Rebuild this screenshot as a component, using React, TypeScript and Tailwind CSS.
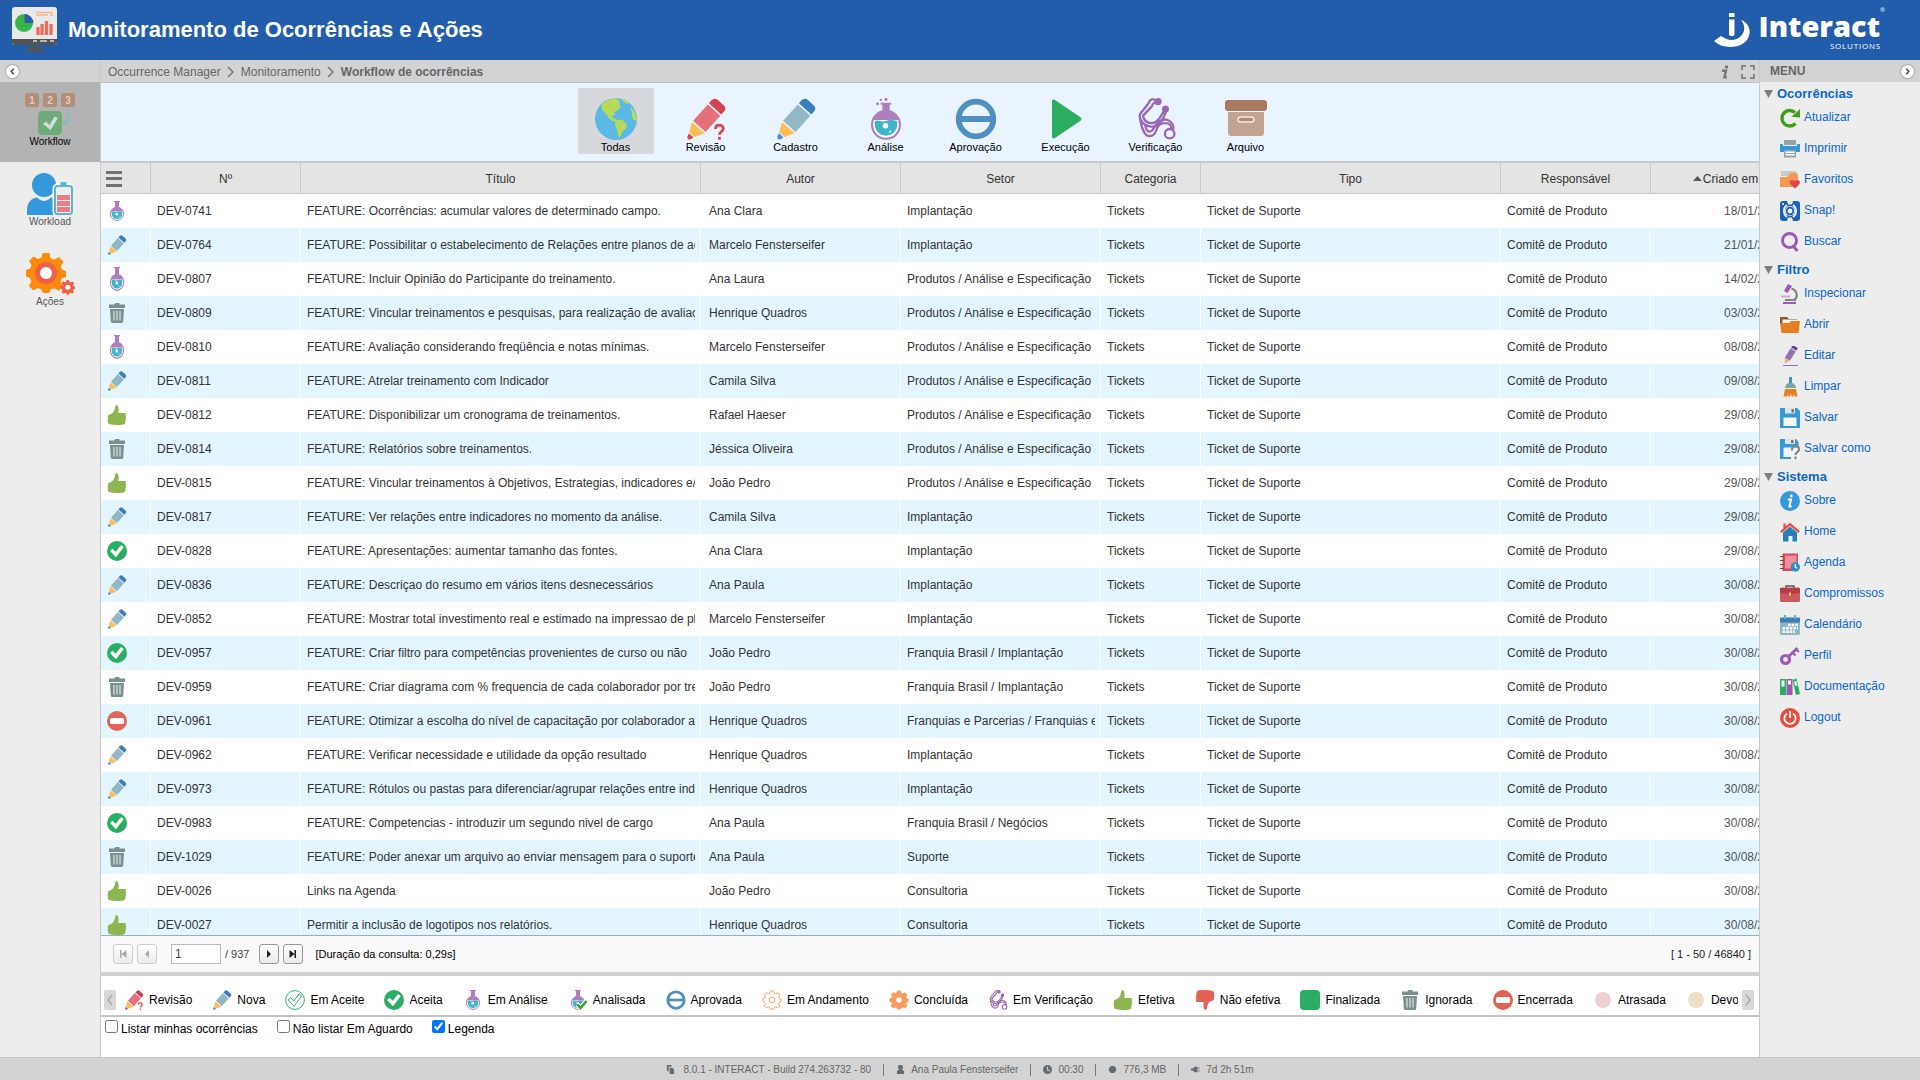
import { useState } from 'react';
import type { ReactNode } from 'react';

interface IconProps {
  className?: string;
}

interface PencilProps extends IconProps {
  body?: string;
  cap?: string;
  tip?: string;
  question?: boolean;
}

/* ---------- status icons ---------- */

function Pencil({ className = 'size-5', body = '#93b7c4', cap = '#3a7fbd', tip = '#4c8fc9', question = false }: PencilProps) {
  return (
    <svg viewBox="0 0 40 40" className={className} aria-hidden="true">
      <g transform="rotate(42 20 20)">
        <path d="M12 3a4 4 0 0 1 4-4h8a4 4 0 0 1 4 4v4H12z" fill={cap} />
        <path d="M12 8.500h16v21H12z" fill={body} />
        <path d="M12 31h16l-4.500 9h-7z" fill="#fdbd55" />
        <path d="M17 41h6l-1.200 3.500a2 2 0 0 1-3.600 0z" fill={tip} />
      </g>
      {question && (
        <g fill="none" stroke="#d9434f" strokeWidth="2.600">
          <path d="M29 29.500c0-5 7.500-4.500 7.500-.5 0 3-3.700 2.800-3.700 6" />
          <path d="M32.800 37v2.800" />
        </g>
      )}
    </svg>
  );
}

function RevisionPencil({ className }: IconProps) {
  return <Pencil className={className} body="#e5707a" cap="#d1434f" tip="#cf4a55" question />;
}

function Flask({ className = 'size-5', bubbles = false, check = false }: IconProps & { bubbles?: boolean; check?: boolean }) {
  return (
    <svg viewBox="0 0 40 40" preserveAspectRatio="none" className={className} aria-hidden="true">
      {bubbles && (
        <g fill="#a56fb9">
          <circle cx="12" cy="5.500" r="1.300" />
          <circle cx="15" cy="1.800" r="1" />
          <circle cx="20" cy="1.500" r="1.400" />
          <circle cx="16" cy="5" r=".8" />
        </g>
      )}
      <path d={bubbles ? 'M15 4.500h10v2h-1.500v8h-7v-8H15z' : 'M14 0h12v2h-2v12h-8V2h-2z'} fill="#ad80bd" />
      <circle cx="20" cy="25.500" r="13.300" fill="#fff" stroke="#ad80bd" strokeWidth="2" />
      <path d="M8 21c2-5 6-8 9-8.500h6c3 .5 7 3.500 9 8.500z" fill="#ad80bd" />
      <path d="M9.500 22c4-2 6 1.500 10 0s7-1 11 0c1.500 7-3 14-10.500 14S8 29 9.500 22z" fill="#40b4c8" />
      <circle cx="19.500" cy="26.500" r="2.600" fill="#fff" />
      <circle cx="24" cy="32" r="1" fill="#fff" />
      {check && (
        <>
          <path d="m19 29 6 7 12-14" fill="none" stroke="#fff" strokeWidth="9" />
          <path d="m19 29 6 7 12-14" fill="none" stroke="#3da40f" strokeWidth="5" />
        </>
      )}
    </svg>
  );
}

function AnalysedFlask({ className }: IconProps) {
  return <Flask className={className} check />;
}

function BubbleFlask({ className }: IconProps) {
  return <Flask className={className} bubbles />;
}

function Trash({ className = 'size-5' }: IconProps) {
  return (
    <svg viewBox="0 0 20 20" className={className} aria-hidden="true">
      <path d="M8 0h4.500v1.500H18V5H2V1.500h5.500zM3 6h14l-.8 12.500A1.600 1.600 0 0 1 14.600 20H5.400a1.600 1.600 0 0 1-1.600-1.500z" fill="#7c8f8e" />
      <path d="M7 8v9.500M10 8v9.500M13 8v9.500" stroke="#dfe6e6" strokeWidth="1.200" />
    </svg>
  );
}

function Thumb({ className = 'size-5', down = false }: IconProps & { down?: boolean }) {
  return (
    <svg viewBox="0 0 20 20" className={className} aria-hidden="true">
      <g transform={down ? 'rotate(180 10 10)' : undefined}>
        <path
          d="M.8 12c0-1.400.8-2.200 2-2.500C6 8.500 7.800 6 8.200 1.500 8.300.5 9.300 0 10 .3c1.700.8 2 4 1.200 7.700h6.500c1.300 0 1.800 1.500.8 2.400 1 .7.900 2.200 0 2.700.8.800.6 2.100-.2 2.600.5 1.500 0 3.300-1.800 3.900-2 .6-9 .6-12.500-.1C1.500 19 .8 18 .8 16.200z"
          fill={down ? '#e26354' : '#8db653'}
        />
      </g>
    </svg>
  );
}

function ThumbDown({ className }: IconProps) {
  return <Thumb className={className} down />;
}

function CheckCircle({ className = 'size-5' }: IconProps) {
  return (
    <svg viewBox="0 0 20 20" className={className} aria-hidden="true">
      <circle cx="10" cy="10" r="10" fill="#2aae63" />
      <path d="m3 10 6 6.300L16.800 6l-2.800-2-5.200 6.800L5.500 7.800z" fill="#fff" />
    </svg>
  );
}

function CheckCircleOutline({ className = 'size-5' }: IconProps) {
  return (
    <svg viewBox="0 0 20 20" className={className} fill="none" stroke="#35b36c" aria-hidden="true">
      <circle cx="10" cy="10" r="9.400" />
      <path d="m3 10 6 6.300L16.800 6l-2.800-2-5.200 6.800L5.500 7.800z" />
    </svg>
  );
}

function NoEntry({ className = 'size-5' }: IconProps) {
  return (
    <svg viewBox="0 0 20 20" className={className} aria-hidden="true">
      <circle cx="10" cy="10" r="10" fill="#e26358" />
      <rect x="3" y="7" width="14" height="6" rx="1.500" fill="#fff" />
    </svg>
  );
}

function Approve({ className = 'size-5' }: IconProps) {
  return (
    <svg viewBox="0 0 40 40" className={className} fill="none" stroke="#528fc1" strokeWidth="5.500" aria-hidden="true">
      <circle cx="20" cy="20" r="16.500" />
      <path d="M4 20h32" />
    </svg>
  );
}

const GEAR =
  'M8.300 0h3.400l.6 2.600 1.800.8L16.400 2l2.300 2.400-1.300 2.300.7 1.700L20 9v3l-2 .6-.7 1.800 1.200 2.200-2.200 2.300-2.300-1.300-1.800.7-.6 1.700H8.400l-.7-1.800-1.700-.7-2.300 1.300-2.300-2.300 1.300-2.300-.7-1.700L0 11.700V8.500l2.100-.7.700-1.700L1.500 4l2.300-2.300L6 3l1.700-.7z';

function Gear({ className = 'size-5', outline = false }: IconProps & { outline?: boolean }) {
  return (
    <svg viewBox="-1 -1 22 22" className={className} aria-hidden="true">
      <path d={GEAR} fill={outline ? 'none' : '#fa9a60'} stroke="#fa9a60" strokeWidth="1" strokeLinejoin="round" />
      <circle cx="10" cy="10" r="3" fill="#fff" stroke={outline ? '#fa9a60' : 'none'} />
    </svg>
  );
}

function GearOutline({ className }: IconProps) {
  return <Gear className={className} outline />;
}

function Stethoscope({ className = 'size-5' }: IconProps) {
  return (
    <svg viewBox="0 0 40 40" className={className} fill="none" stroke="#9b67b5" strokeWidth="2.200" strokeLinejoin="round" aria-hidden="true">
      <path d="M21 3c-3-3-7-2-8 2L5 15c-2 4 2 11 9 12 5 1 9-1 12-6l4-9" />
      <path d="M22.500 5c-4-2-5.500 0-6.500 3L7.500 17c1 4 4 7 8 7s6-2 8-5l5-8" />
      <path d="M5 19c0 6 3 14 6 16.500 4 2 8 0 9-4s4-8 9-7.500c4 0 6 2 5.500 6" />
      <path d="M10 26c0 3 1.500 6 4 6 4 0 4-6 8-9s8-3 11-1 4 5 3.500 8" />
      <circle cx="33" cy="34" r="4.500" />
      <circle cx="22" cy="3.500" r="2.300" fill="#9b67b5" />
      <circle cx="29" cy="10.500" r="2.300" fill="#9b67b5" />
    </svg>
  );
}

function Square({ className = 'size-5' }: IconProps) {
  return (
    <svg viewBox="0 0 20 20" className={className} aria-hidden="true">
      <rect width="20" height="20" rx="4" fill="#2aae63" />
    </svg>
  );
}

function PinkDot({ className = 'size-5' }: IconProps) {
  return (
    <svg viewBox="0 0 20 20" className={className} aria-hidden="true">
      <circle cx="10" cy="10" r="8" fill="#f0cfd2" />
    </svg>
  );
}

function SandDot({ className = 'size-5' }: IconProps) {
  return (
    <svg viewBox="0 0 20 20" className={className} aria-hidden="true">
      <circle cx="10" cy="10" r="8" fill="#efdec8" />
    </svg>
  );
}

/* ---------- toolbar icons ---------- */

function Globe({ className }: IconProps) {
  return (
    <svg viewBox="0 0 42 42" className={className} aria-hidden="true">
      <circle cx="21" cy="21" r="21" fill="#5bb9e6" />
      <path d="M7 6c5-4 9-5.500 14-6 3 3 5 4 3 6l2 3-3 3-4 2 1 3-4 1 4 3 2 1-1 2c-5-1-8-4-9-7C9 14 5 11 7 6z" fill="#b5dc58" />
      <path d="M26 1c4 .5 6 1.500 8 4l-2 1c-2-2-4-2-6-5zM22 22c5-2 8 2 10 5 0 4-4 5-5 8-1 2-2 4-3 4-2-2-1-5-2-8-2-2-3-6 0-9zM36 9c3 3 5 7 6 13-3 1-5-1-5-4 1-4-2-5-1-9z" fill="#b5dc58" />
    </svg>
  );
}

function Play({ className }: IconProps) {
  return (
    <svg viewBox="0 0 42 42" className={className} aria-hidden="true">
      <path d="M7 3.500c0-2 1.500-2.500 3-1.500l25.500 17.300c1.300 1 1.300 2.400 0 3.400L10 40c-1.500 1-3 .5-3-1.500z" fill="#2bae61" />
    </svg>
  );
}

function ArchiveBox({ className }: IconProps) {
  return (
    <svg viewBox="0 0 42 42" className={className} aria-hidden="true">
      <rect y="2" width="42" height="11" rx="3" fill="#a97a60" />
      <path d="M3 14h36v20.500a3.500 3.500 0 0 1-3.500 3.500h-29A3.500 3.500 0 0 1 3 34.500z" fill="#c1a390" />
      <rect x="13" y="19" width="16" height="5" rx="2.500" fill="#b08b75" stroke="#f2e9e3" strokeWidth="1.500" />
    </svg>
  );
}

/* ---------- sidebar icons ---------- */

function WorkflowIcon() {
  return (
    <svg viewBox="0 0 50 42" className="h-[42px] w-[50px]" aria-hidden="true">
      <path d="M12 7h25M43.500 13v17H40" fill="none" stroke="#82b8cb" strokeWidth="1.500" />
      <path d="m41.500 26.500-4 3.500 4 3z" fill="#82b8cb" />
      <g fill="#b58c76">
        <rect width="14" height="14" rx="2.500" />
        <rect x="18" width="14" height="14" rx="2.500" />
        <rect x="36" width="14" height="14" rx="2.500" />
      </g>
      <g fill="#d6cfcb" fontFamily="Liberation Sans, sans-serif" fontSize="10" fontWeight="700" textAnchor="middle">
        <text x="7" y="10.500">1</text>
        <text x="25" y="10.500">2</text>
        <text x="43" y="10.500">3</text>
      </g>
      <rect x="13" y="18" width="24" height="24" rx="4.500" fill="#6faa79" />
      <path d="m18 31 3-2.500 3.500 3.500 5-8.500 3.500 1.500-7.500 12z" fill="#d5dcd5" />
    </svg>
  );
}

function WorkloadIcon() {
  return (
    <svg viewBox="0 0 46 42" className="h-[42px] w-[46px]" aria-hidden="true">
      <circle cx="17" cy="12" r="12" fill="#3498db" />
      <path d="M0 42V37c0-8 5-12 10-12.500 5 4.500 9 4.500 14 0h2V42z" fill="#3498db" />
      <rect x="27.500" y="12.500" width="17.500" height="29" rx="3" fill="#f3f5f6" stroke="#fff" strokeWidth="4" />
      <rect x="28" y="13" width="17" height="28" rx="2.500" fill="#eee" stroke="#56b9ca" strokeWidth="2" />
      <rect x="33.500" y="9" width="6" height="4" rx="1" fill="#56b9ca" />
      <path d="M30 22h13v5H30zM30 28h13v5H30zM30 34h13v5H30z" fill="#ea7c86" />
    </svg>
  );
}

function ActionsIcon() {
  return (
    <svg viewBox="0 0 49 42" className="h-[42px] w-[49px]" aria-hidden="true">
      <path d={GEAR} transform="scale(2)" fill="#fd8a0a" />
      <circle cx="20" cy="20" r="11" fill="#ee6148" />
      <circle cx="20" cy="20" r="6" fill="#fff" />
      <path d={GEAR} transform="translate(34.500 27) scale(.73)" fill="#ee6148" />
      <circle cx="41.800" cy="34.300" r="2.500" fill="#fff" />
    </svg>
  );
}

/* ---------- right menu icons ---------- */

const MENU_ICONS: Record<string, ReactNode> = {
  Atualizar: (
    <>
      <path d="M15.500 15.500A7.800 7.800 0 1 1 15 4.500" fill="none" stroke="#3c9f17" strokeWidth="3.400" />
      <path d="M20 1v8.500l-8.500-.8z" fill="#3c9f17" />
    </>
  ),
  Imprimir: (
    <>
      <path d="M4 1h12v5H4z" fill="#95a5a6" />
      <path d="M0 5h3v2h14V5h3v8H0z" fill="#3498db" />
      <path d="M4 11h12v7.500H4z" fill="#95a5a6" />
      <path d="M5.500 12.500h9v1.500h-9zm0 2.500h9v1.500h-9z" fill="#fff" />
    </>
  ),
  Favoritos: (
    <>
      <path d="M1 1h15v5H1z" fill="#c7c9ca" />
      <path d="M0 7h7l3-4h7l1 3v11H0z" fill="#f3994f" />
      <path d="M14.800 18.500 10 13.800c-1.500-2.500 2-5.500 4.800-2.500 2.500-3 6.500 0 4.700 2.500z" fill="#e4434e" />
    </>
  ),
  'Snap!': (
    <>
      <rect width="20" height="20" rx="3" fill="#1c61b8" />
      <path d="M7 0h6l-1 3.500H8zM7 20h6l-1-3.500H8z" fill="#ededed" />
      <path d="M7 4C3 6.500 3 13.500 7 16M13 4c4 2.500 4 9.500 0 12" fill="none" stroke="#ededed" strokeWidth="2" />
      <circle cx="10" cy="10" r="5" fill="#ededed" />
      <circle cx="10" cy="10" r="3.300" fill="none" stroke="#1c61b8" strokeWidth="1.800" />
      <circle cx="3" cy="3" r="1" fill="#fff" />
    </>
  ),
  Buscar: (
    <g fill="none" stroke="#9b59b6" strokeWidth="3">
      <circle cx="9.500" cy="8.500" r="7" />
      <path d="m13 14 4.500 5" />
    </g>
  ),
  Inspecionar: (
    <>
      <path d="m8 0 4 2-4.500 7L4 7z" fill="#9b59b6" />
      <path d="M11.500 4.500c6 2 7 9 2 12M5 16h11" fill="none" stroke="#7b8585" strokeWidth="2.200" />
      <path d="M1 12.500h9" stroke="#c9a6d8" strokeWidth="1.800" />
      <path d="M3 19h13" stroke="#9b59b6" strokeWidth="2" />
    </>
  ),
  Abrir: (
    <>
      <path d="M0 2h7l2 2h8v5H0z" fill="#8d5a1e" />
      <path d="M2.500 4.500H17V10H2.500z" fill="#f5f5f5" />
      <path d="M0 8h9l2-2h9l-1.500 12h-17z" fill="#e67e22" />
    </>
  ),
  Editar: (
    <>
      <g transform="rotate(32 10 9)">
        <path d="M7-1h6v3H7z" fill="#5e4483" />
        <path d="M7 3h6v11H7z" fill="#8e72b1" />
        <path d="m7 14 6 0-3 5z" fill="#f0b277" />
      </g>
      <path d="M3 19.500h15" stroke="#8e72b1" />
    </>
  ),
  Limpar: (
    <>
      <path d="M9 0h3v6H9z" fill="#5292a3" />
      <path d="M9 6h3c2 0 3.500 2 4 5H5c.5-3 2-5 4-5z" fill="#77a6b2" />
      <path d="M5 12h11l1.500 7.500h-3L14 16l-.5 3.500h-2L11 16l-1 3.500H8L8.500 16 7 19.500H3.500z" fill="#e67e22" />
    </>
  ),
  Salvar: (
    <>
      <path d="M0 0h17l3 3v17H0z" fill="#3498db" />
      <path d="M5 0h10v5.500H5z" fill="#dfe4e6" />
      <path d="M3.500 9.500h13V18h-13z" fill="#f4f6f7" />
      <path d="M11.500 1H14v3.500h-2.500z" fill="#777" />
    </>
  ),
  'Salvar como': (
    <>
      <path d="M0 0h16l2.500 3v17H0z" fill="#3498db" />
      <path d="M5 0h10v5H5z" fill="#dfe4e6" />
      <path d="M3.500 8.500H20V20h-9v-2H3.500z" fill="#f4f6f7" />
      <path d="M11 1h2.500v3H11z" fill="#777" />
      <path d="M12 11.500c-.5-6 7.500-5.500 7-1-.3 3-3.500 2.500-3.500 5.500M15.500 17.500V20" fill="none" stroke="#7d8a8b" strokeWidth="2.200" />
    </>
  ),
  Sobre: (
    <>
      <circle cx="10" cy="10" r="10" fill="#3498db" />
      <circle cx="11.300" cy="5" r="1.400" fill="#fff" />
      <path d="M8 8.500h3l-1.500 7h2.200" fill="none" stroke="#fff" strokeWidth="2" />
    </>
  ),
  Home: (
    <>
      <path d="M3 10.500 10 4.500l7 6v9h-4.500V14h-4v5.500H3z" fill="#2980b9" />
      <path d="m.8 10.200 9.200-8 9.200 8M4.500 6V1.500" fill="none" stroke="#e74c3c" strokeWidth="2.200" />
    </>
  ),
  Agenda: (
    <>
      <path d="M2.500.5H18v17.500H2.500z" fill="#d1495b" />
      <path d="M5 2.500h11.500v13H5z" fill="#f28f98" />
      <path d="M0 3.500h4M0 7.500h4M0 11.500h4M0 15.500h4" stroke="#555" strokeWidth="1.200" />
      <circle cx="15.300" cy="14" r="4.700" fill="#2b8fd0" />
      <path d="M15.300 11v3.200l2 1" fill="none" stroke="#fff" strokeWidth="1.200" />
    </>
  ),
  Compromissos: (
    <>
      <path d="M6 4V2h8v2" fill="none" stroke="#555" strokeWidth="1.400" />
      <rect y="3.500" width="20" height="14.500" rx="1.500" fill="#cb5a60" />
      <path d="M0 4h20v5l-10 1.500L0 9z" fill="#b93c46" />
      <path d="M9 8.500h2v3H9z" fill="#f5c542" />
    </>
  ),
  Calendário: (
    <>
      <rect y="2" width="20" height="18" rx="1.500" fill="#8fb6c3" />
      <path d="M0 3h20v4.500H0z" fill="#3d7fb5" />
      <path d="M4 0h2v4H4zm10 0h2v4h-2z" fill="#57b5c9" />
      <path d="M8 10h10M2.500 13.300h15.500M2.500 16.700H15" stroke="#fff" strokeWidth="2.400" strokeDasharray="2.600 1" />
    </>
  ),
  Perfil: (
    <g fill="none" stroke="#9b59b6">
      <circle cx="5.500" cy="13.500" r="4" strokeWidth="3.200" />
      <path d="m8.500 10.500 9-8.500" strokeWidth="3" />
      <path d="m12.500 6.500 3 3M16 3.500l3 2.500" strokeWidth="2.200" />
    </g>
  ),
  Documentação: (
    <>
      <path d="M0 2h6v16H0z" fill="#27ae60" />
      <path d="M6.500 2h6v16h-6z" fill="#9b59b6" />
      <path d="m12.500 3 4-1.500L20 17l-4 1z" fill="#27ae60" />
      <path d="M1.500 3.500h3v6h-3zm6.500 0h3v4H8zM14 4.500l2.200-.6 1.200 4.500-2.200.6z" fill="#fff" />
    </>
  ),
  Logout: (
    <>
      <circle cx="10" cy="10" r="10" fill="#e74c3c" />
      <path d="M7 5.500a5.600 5.600 0 1 0 6 0M10 3v7" fill="none" stroke="#fff" strokeWidth="1.800" />
    </>
  ),
};

const MENU = [
  { title: 'Ocorrências', items: ['Atualizar', 'Imprimir', 'Favoritos', 'Snap!', 'Buscar'] },
  { title: 'Filtro', items: ['Inspecionar', 'Abrir', 'Editar', 'Limpar', 'Salvar', 'Salvar como'] },
  { title: 'Sistema', items: ['Sobre', 'Home', 'Agenda', 'Compromissos', 'Calendário', 'Perfil', 'Documentação', 'Logout'] },
];

const TOOLBAR = [
  { label: 'Todas', icon: Globe },
  { label: 'Revisão', icon: RevisionPencil },
  { label: 'Cadastro', icon: Pencil },
  { label: 'Análise', icon: BubbleFlask },
  { label: 'Aprovação', icon: Approve },
  { label: 'Execução', icon: Play },
  { label: 'Verificação', icon: Stethoscope },
  { label: 'Arquivo', icon: ArchiveBox },
];

const LEGEND = [
  { label: 'Revisão', icon: RevisionPencil },
  { label: 'Nova', icon: Pencil },
  { label: 'Em Aceite', icon: CheckCircleOutline },
  { label: 'Aceita', icon: CheckCircle },
  { label: 'Em Análise', icon: Flask },
  { label: 'Analisada', icon: AnalysedFlask },
  { label: 'Aprovada', icon: Approve },
  { label: 'Em Andamento', icon: GearOutline },
  { label: 'Concluída', icon: Gear },
  { label: 'Em Verificação', icon: Stethoscope },
  { label: 'Efetiva', icon: Thumb },
  { label: 'Não efetiva', icon: ThumbDown },
  { label: 'Finalizada', icon: Square },
  { label: 'Ignorada', icon: Trash },
  { label: 'Encerrada', icon: NoEntry },
  { label: 'Atrasada', icon: PinkDot },
  { label: 'Devolvida', icon: SandDot },
];

const STATUS: Record<string, ReactNode> = {
  flask: <Flask />,
  flaskLg: <Flask className="h-6 w-6" />,
  pencil: <Pencil />,
  trash: <Trash />,
  thumb: <Thumb />,
  check: <CheckCircle />,
  closed: <NoEntry />,
};

const ESPEC = 'Produtos / Análise e Especificação';

// status, code, title, author, sector, created
const ROWS = [
  ['flask', 'DEV-0741', 'FEATURE: Ocorrências: acumular valores de determinado campo.', 'Ana Clara', 'Implantação', '18/01/2'],
  ['pencil', 'DEV-0764', 'FEATURE: Possibilitar o estabelecimento de Relações entre planos de ação', 'Marcelo Fensterseifer', 'Implantação', '21/01/2'],
  ['flaskLg', 'DEV-0807', 'FEATURE: Incluir Opinião do Participante do treinamento.', 'Ana Laura', ESPEC, '14/02/2'],
  ['trash', 'DEV-0809', 'FEATURE: Vincular treinamentos e pesquisas, para realização de avaliação', 'Henrique Quadros', ESPEC, '03/03/2'],
  ['flaskLg', 'DEV-0810', 'FEATURE: Avaliação considerando freqüência e notas mínimas.', 'Marcelo Fensterseifer', ESPEC, '08/08/2'],
  ['pencil', 'DEV-0811', 'FEATURE: Atrelar treinamento com Indicador', 'Camila Silva', ESPEC, '09/08/2'],
  ['thumb', 'DEV-0812', 'FEATURE: Disponibilizar um cronograma de treinamentos.', 'Rafael Haeser', ESPEC, '29/08/2'],
  ['trash', 'DEV-0814', 'FEATURE: Relatórios sobre treinamentos.', 'Jéssica Oliveira', ESPEC, '29/08/2'],
  ['thumb', 'DEV-0815', 'FEATURE: Vincular treinamentos à Objetivos, Estrategias, indicadores e/ou', 'João Pedro', ESPEC, '29/08/2'],
  ['pencil', 'DEV-0817', 'FEATURE: Ver relações entre indicadores no momento da análise.', 'Camila Silva', 'Implantação', '29/08/2'],
  ['check', 'DEV-0828', 'FEATURE: Apresentações: aumentar tamanho das fontes.', 'Ana Clara', 'Implantação', '29/08/2'],
  ['pencil', 'DEV-0836', 'FEATURE: Descriçao do resumo em vários itens desnecessários', 'Ana Paula', 'Implantação', '30/08/2'],
  ['pencil', 'DEV-0852', 'FEATURE: Mostrar total investimento real e estimado na impressao de planos', 'Marcelo Fensterseifer', 'Implantação', '30/08/2'],
  ['check', 'DEV-0957', 'FEATURE: Criar filtro para competências provenientes de curso ou não', 'João Pedro', 'Franquia Brasil / Implantação', '30/08/2'],
  ['trash', 'DEV-0959', 'FEATURE: Criar diagrama com % frequencia de cada colaborador por treinamento', 'João Pedro', 'Franquia Brasil / Implantação', '30/08/2'],
  ['closed', 'DEV-0961', 'FEATURE: Otimizar a escolha do nível de capacitação por colaborador a', 'Henrique Quadros', 'Franquias e Parcerias / Franquias e', '30/08/2'],
  ['pencil', 'DEV-0962', 'FEATURE: Verificar necessidade e utilidade da opção resultado', 'Henrique Quadros', 'Implantação', '30/08/2'],
  ['pencil', 'DEV-0973', 'FEATURE: Rótulos ou pastas para diferenciar/agrupar relações entre ind', 'Henrique Quadros', 'Implantação', '30/08/2'],
  ['check', 'DEV-0983', 'FEATURE: Competencias - introduzir um segundo nivel de cargo', 'Ana Paula', 'Franquia Brasil / Negócios', '30/08/2'],
  ['trash', 'DEV-1029', 'FEATURE: Poder anexar um arquivo ao enviar mensagem para o suporte', 'Ana Paula', 'Suporte', '30/08/2'],
  ['thumb', 'DEV-0026', 'Links na Agenda', 'João Pedro', 'Consultoria', '30/08/2'],
  ['thumb', 'DEV-0027', 'Permitir a inclusão de logotipos nos relatórios.', 'Henrique Quadros', 'Consultoria', '30/08/2'],
];

function Header() {
  return (
    <header className="flex h-[60px] shrink-0 items-center justify-between bg-[#225dac] pr-[39px] pl-3 text-white">
      <div className="flex items-center gap-[11px]">
        <svg viewBox="0 0 45 46" className="h-[46px] w-[45px]" aria-hidden="true">
          <path d="M18 39h9l1 3h3l1 3H14l1-3h3z" fill="#555" />
          <rect width="45" height="38" rx="3" fill="#e9e9ea" />
          <path d="M0 32h45v3a3 3 0 0 1-3 3H3a3 3 0 0 1-3-3z" fill="#505457" />
          <path d="M21 34h4M28 34h7M38 34h4" stroke="#d8d8d8" strokeWidth="1.500" />
          <circle cx="12" cy="16" r="9" fill="#38b549" />
          <path d="M12.500 7a9.500 9.500 0 0 1 9 9h-9z" fill="#2c5fa8" />
          <path d="M24 5.500h17M24 8h12M38 8h3" stroke="#f6b48f" strokeWidth="1.500" />
          <path d="M26 28v-8M30 28V17M34.500 28V14M39 28V17" stroke="#ef6a57" strokeWidth="3.300" />
        </svg>
        <h1 className="text-[22px] leading-7 font-bold">Monitoramento de Ocorrências e Ações</h1>
      </div>
      <div className="flex items-center gap-2">
        <svg viewBox="0 0 38 36" className="h-9 w-[38px]" aria-hidden="true">
          <path d="M16 1h5.500v4H16zM16 7.500h5.500V23a4 4 0 0 1-5.500 0z" fill="#fff" />
          <path d="M28 8c9 3 11 13 6 20-7 9-25 9-33 1l7-5c5 4 13 6 19 1 5-4 6-11 1-17z" fill="#fff" />
        </svg>
        <div className="flex flex-col items-end font-['Open_Sans',sans-serif]">
          <div className="flex h-8 items-center text-[29px] font-extrabold">
            Interact
            <sup className="-mr-1 self-start text-[6px] leading-[6px] font-normal">®</sup>
          </div>
          <div className="text-[8px] leading-[8px] tracking-widest">SOLUTIONS</div>
        </div>
      </div>
    </header>
  );
}

function RoundButton({ label, flip }: { label: string; flip?: boolean }) {
  return (
    <button type="button" aria-label={label} className="flex size-[13px] items-center justify-center rounded-full bg-white shadow-[0_0_1px_1px_#aaa]">
      <svg viewBox="0 0 14 14" className="size-[13px]" fill="none" stroke="#444" strokeWidth="1.500" aria-hidden="true">
        <path d={flip ? 'm5.500 4 3 3-3 3' : 'm8.500 4-3 3 3 3'} />
      </svg>
    </button>
  );
}

function Sidebar() {
  const items = [
    { label: 'Workflow', icon: <WorkflowIcon />, active: true },
    { label: 'Workload', icon: <WorkloadIcon /> },
    { label: 'Ações', icon: <ActionsIcon /> },
  ];
  return (
    <aside className="w-[101px] shrink-0 border-r border-[#c8c8c8] bg-[#ededed]">
      <div className="flex h-[22px] items-center bg-[#d3d3d3] px-[6px]">
        <RoundButton label="Recolher" />
      </div>
      <nav>
        {items.map(item => (
          <a
            key={item.label}
            href="#"
            className={
              item.active
                ? 'flex h-20 flex-col items-center bg-[#b3b3b3] pt-[11px] text-[10px] leading-[14px] text-black'
                : 'flex h-20 flex-col items-center pt-[11px] text-[10px] leading-[14px] text-[#555]'
            }
          >
            {item.icon}
            {item.label}
          </a>
        ))}
      </nav>
    </aside>
  );
}

function Crumbs() {
  const sep = (
    <svg viewBox="0 0 8 12" className="h-3 w-2" fill="none" stroke="#777" strokeWidth="1.500" aria-hidden="true">
      <path d="m1 1 5 5-5 5" />
    </svg>
  );
  return (
    <div className="flex h-[23px] shrink-0 items-center justify-between border-b border-[#c0c0c0] bg-[#d3d3d3] pt-px pr-1 pl-[7px] text-xs text-[#666]">
      <nav className="flex items-center gap-[6px]">
        <a href="#">Occurrence Manager</a>
        {sep}
        <a href="#">Monitoramento</a>
        {sep}
        <span className="font-bold">Workflow de ocorrências</span>
      </nav>
      <div className="flex items-center gap-3">
        <button type="button" aria-label="Informações">
          <svg viewBox="0 0 8 14" className="h-[14px] w-2" aria-hidden="true">
            <circle cx="5.500" cy="2" r="1.800" fill="#777" />
            <path d="M1 5.800h4l-1.600 6.500h2.400" fill="none" stroke="#777" strokeWidth="2.400" />
          </svg>
        </button>
        <button type="button" aria-label="Tela cheia">
          <svg viewBox="0 0 14 14" className="size-[14px]" fill="none" stroke="#888" strokeWidth="2" aria-hidden="true">
            <path d="M1 5V1h4M9 1h4v4M13 9v4H9M5 13H1V9" />
          </svg>
        </button>
      </div>
    </div>
  );
}

function Toolbar() {
  const [active, setActive] = useState('Todas');
  return (
    <div className="flex h-[80px] shrink-0 items-start justify-center gap-[14px] border-b-2 border-[#c6c8ca] bg-[#e9f4ff] pt-[5px] pl-px">
      {TOOLBAR.map(({ label, icon: Icon }) => (
        <button
          key={label}
          type="button"
          onClick={() => setActive(label)}
          className={
            active === label
              ? 'flex h-[66px] w-[76px] flex-col items-center bg-[#d6d8dc] pt-[10px] text-[11px] leading-[14px] text-black'
              : 'flex h-[66px] w-[76px] flex-col items-center pt-[10px] text-[11px] leading-[14px] text-black'
          }
        >
          <Icon className="size-[42px]" />
          {label}
        </button>
      ))}
    </div>
  );
}

function Grid() {
  const th = 'border-r border-b border-[#c8c8c8] pt-px font-normal';
  const td = 'overflow-hidden border-r border-white px-0 pl-[6px]';
  const clip = 'mr-[5px] block overflow-hidden whitespace-nowrap';
  return (
    <div className="min-h-0 grow overflow-hidden border-b border-[#9fabc0]">
      <table className="w-[1700px] min-w-full table-fixed border-separate border-spacing-0 text-xs text-[#333]">
        <colgroup>
          <col className="w-[50px]" />
          <col className="w-[150px]" />
          <col className="w-[400px]" />
          <col className="w-[200px]" />
          <col className="w-[200px]" />
          <col className="w-[100px]" />
          <col className="w-[300px]" />
          <col className="w-[150px]" />
          <col className="w-[150px]" />
        </colgroup>
        <thead>
          <tr className="h-[31px] bg-[#e4e4e4]">
            <th className={th}>
              <button type="button" aria-label="Opções" className="ml-[5px] flex h-4 w-4 flex-col justify-between">
                <span className="h-[3px] w-full bg-[#707070]" />
                <span className="h-[3px] w-full bg-[#707070]" />
                <span className="h-[3px] w-full bg-[#707070]" />
              </button>
            </th>
            <th className={th}>Nº</th>
            <th className={th}>Título</th>
            <th className={th}>Autor</th>
            <th className={th}>Setor</th>
            <th className={th}>Categoria</th>
            <th className={th}>Tipo</th>
            <th className={th}>Responsável</th>
            <th className={th}>
              <span className="flex items-center justify-center gap-px">
                <svg viewBox="0 0 9 5" className="h-[5px] w-[9px]" aria-hidden="true">
                  <path d="M0 5 4.500 0 9 5z" fill="#555" />
                </svg>
                Criado em
              </span>
            </th>
          </tr>
        </thead>
        <tbody>
          {ROWS.map(([status, code, title, author, sector, created]) => (
            <tr key={code} className="h-[34px] even:bg-[#e3f6ff]">
              <td className={td}>
                <span className="flex w-5 justify-center">{STATUS[status]}</span>
              </td>
              <td className={td}>{code}</td>
              <td className={td}><span className={clip}>{title}</span></td>
              <td className="border-r border-white pl-2">{author}</td>
              <td className={td}><span className={clip}>{sector}</span></td>
              <td className={td}>Tickets</td>
              <td className={td}>Ticket de Suporte</td>
              <td className={td}>Comitê de Produto</td>
              <td className="pl-[73px] text-[#555]">{created}</td>
            </tr>
          ))}
        </tbody>
      </table>
    </div>
  );
}

function PageButton({ label, d, disabled }: { label: string; d: string; disabled?: boolean }) {
  return (
    <button
      type="button"
      aria-label={label}
      disabled={disabled}
      className="flex size-5 items-center justify-center rounded-[3px] border border-[#999] bg-linear-to-b from-white to-[#ececec] disabled:border-[#ccc]"
    >
      <svg viewBox="0 0 10 10" className="size-[10px]" fill={disabled ? '#aaa' : '#222'} aria-hidden="true">
        <path d={d} />
      </svg>
    </button>
  );
}

function Pager() {
  return (
    <div className="flex h-9 shrink-0 items-center justify-between bg-[#f9f9f9] pr-2 pl-3 text-[11px]">
      <div className="flex items-center">
        <div className="flex gap-1">
          <PageButton label="Primeira" d="M2 1h1.500v8H2zM8.500 1v8l-5-4z" disabled />
          <PageButton label="Anterior" d="M7 1v8L3 5z" disabled />
        </div>
        <input
          aria-label="Página"
          defaultValue="1"
          className="ml-[14px] h-5 w-[50px] border border-[#bbb] bg-white px-[3px] text-xs text-[#444]"
        />
        <span className="ml-1 text-[#444]">/ 937</span>
        <div className="ml-[10px] flex gap-1">
          <PageButton label="Próxima" d="M3 1v8l4-4z" />
          <PageButton label="Última" d="M6.500 1H8v8H6.500zM1.500 1v8l5-4z" />
        </div>
        <span className="ml-3">[Duração da consulta: 0,29s]</span>
      </div>
      <span className="text-[#222]">[ 1 - 50 / 46840 ]</span>
    </div>
  );
}

function ScrollButton({ label, d }: { label: string; d: string }) {
  return (
    <button type="button" aria-label={label} className="flex h-5 w-3 shrink-0 items-center justify-center rounded-[2px] bg-[#d8d8d8]">
      <svg viewBox="0 0 8 14" className="h-[14px] w-2" fill="none" stroke="#aaa" strokeWidth="1.500" aria-hidden="true">
        <path d={d} />
      </svg>
    </button>
  );
}

function Legend() {
  return (
    <div className="flex h-[45px] shrink-0 items-end border-t-4 border-b-2 border-t-[#d0d0d0] border-b-[#c4c4c4] pr-[5px] pb-[5px] pl-[3px] text-xs text-black">
      <ScrollButton label="Rolar para a esquerda" d="M6 2 2 7l4 5" />
      <ul className="mr-1 ml-2 flex min-w-0 grow gap-[20px] overflow-hidden">
        {LEGEND.map(({ label, icon: Icon }) => (
          <li key={label} className="flex shrink-0 items-center gap-[5px]">
            <Icon className="size-5" />
            {label}
          </li>
        ))}
      </ul>
      <ScrollButton label="Rolar para a direita" d="m2 2 4 5-4 5" />
    </div>
  );
}

function Options() {
  const options = [
    { id: 'mine', label: 'Listar minhas ocorrências', checked: false },
    { id: 'hold', label: 'Não listar Em Aguardo', checked: false },
    { id: 'legend', label: 'Legenda', checked: true },
  ];
  return (
    <div className="flex h-10 shrink-0 items-start gap-[19px] pt-[3px] pl-1 text-xs text-black">
      {options.map(o => (
        <div key={o.id} className="flex gap-[3px]">
          <input id={o.id} type="checkbox" defaultChecked={o.checked} className="size-[13px]" />
          <label htmlFor={o.id} className="leading-[18px]">{o.label}</label>
        </div>
      ))}
    </div>
  );
}

function RightMenu() {
  return (
    <aside className="w-[161px] shrink-0 border-l border-[#c8c8c8] bg-[#ededed]">
      <div className="flex h-[22px] items-center justify-between bg-[#d3d3d3] pr-[6px] pl-[10px] text-xs font-bold text-[#666]">
        MENU
        <RoundButton label="Recolher menu" flip />
      </div>
      <nav className="flex flex-col gap-px text-[#0b66c8]">
        {MENU.map(section => (
          <section key={section.title}>
            <h2 className="flex h-5 items-center gap-1 pt-[3px] pl-1 text-[13px] leading-4 font-bold">
              <svg viewBox="0 0 9 8" className="h-2 w-[9px]" aria-hidden="true">
                <path d="M0 0h9L4.500 8z" fill="#808080" />
              </svg>
              {section.title}
            </h2>
            <ul>
              {section.items.map(item => (
                <li key={item} className="h-[31px] pt-[5px] pl-5">
                  <a href="#" className="flex items-start gap-1 text-xs leading-5">
                    <svg viewBox="0 0 20 20" className="mt-px size-5" aria-hidden="true">
                      {MENU_ICONS[item]}
                    </svg>
                    {item}
                  </a>
                </li>
              ))}
            </ul>
          </section>
        ))}
      </nav>
    </aside>
  );
}

function Footer() {
  const items = [
    { text: '8.0.1 - INTERACT - Build 274.263732 - 80', d: 'M1 0h5v2H3v5H1zM4 3h3l2 2v5H4z' },
    { text: 'Ana Paula Fensterseifer', d: 'M5 0a2.500 2.500 0 0 1 1.500 4.700L9 7v3H1V7l2.500-2.300A2.500 2.500 0 0 1 5 0z' },
    { text: '00:30', d: 'M5 0a5 5 0 1 1 0 10A5 5 0 0 1 5 0zm-.5 2v4l3 1 .3-1L5.500 5V2z' },
    { text: '776,3 MB', d: 'M2 2h1V1h4v1h1v1h1v4H8v1H7v1H3V8H2V7H1V3h1z' },
    { text: '7d 2h 51m', d: 'M0 4h2l2-2h3v1h3v1H7v2h3v1H7v1H4L2 6H0z' },
  ];
  return (
    <footer className="flex h-[23px] shrink-0 items-center justify-center border-t border-[#c4c4c4] bg-[#d3d3d3] pt-px text-[10px] text-[#666]">
      {items.map((item, i) => (
        <span key={item.text} className={i > 0 ? 'ml-3 flex items-center gap-[6px] border-l border-[#777] pl-3 leading-3' : 'flex items-center gap-2 leading-3'}>
          <svg viewBox="0 0 10 10" className="size-[9px]" fill="#666b70" fillRule="evenodd" aria-hidden="true">
            <path d={item.d} />
          </svg>
          {item.text}
        </span>
      ))}
    </footer>
  );
}

export default function App() {
  return (
    <div className="flex h-screen flex-col bg-white font-['Liberation_Sans',Arial,sans-serif]">
      <Header />
      <div className="flex min-h-0 grow">
        <Sidebar />
        <main className="flex min-w-0 grow flex-col">
          <Crumbs />
          <Toolbar />
          <Grid />
          <Pager />
          <Legend />
          <Options />
        </main>
        <RightMenu />
      </div>
      <Footer />
    </div>
  );
}
